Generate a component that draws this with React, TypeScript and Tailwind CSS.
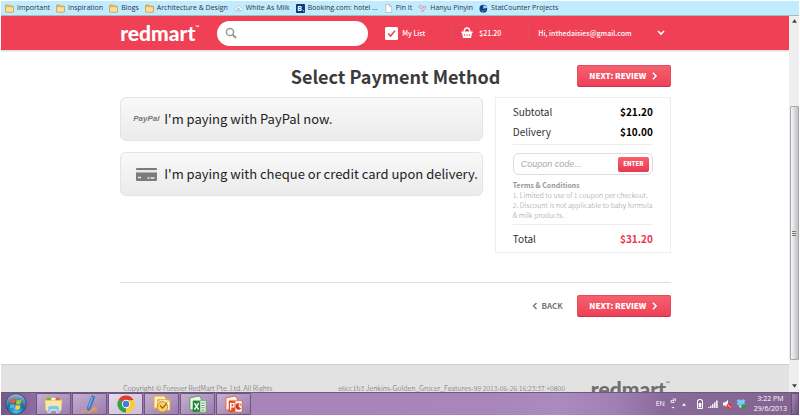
import type { ReactNode } from 'react';

const sourceFont = "font-['Noto_Sans_CJK_SC','Open_Sans',sans-serif]";

function FolderIcon() {
  return (
    <svg viewBox="0 0 10 10" className="w-[9px] h-[9px] shrink-0">
      <path d="M.5 2q0-1 1-1h2.3l1 1.2h3.7q1 0 1 1v5q0 1-1 1h-7q-1 0-1-1z" fill="#e9b95a" stroke="#b98a35" strokeWidth=".6" />
      <path d="M1.2 3.6h7.6v4.3q0 .7-.7.7H1.9q-.7 0-.7-.7z" fill="#fbe09a" />
    </svg>
  );
}

function CloudIcon() {
  return (
    <svg viewBox="0 0 10 10" className="w-[9px] h-[9px] shrink-0">
      <path d="M2.4 7.8Q.4 7.4.8 5.5 1.1 4 2.8 4 3.4 2 5.2 2t2.3 2q1.8.1 1.9 1.9 0 1.6-1.7 1.9z" fill="#eefaff" stroke="#9fc0cf" strokeWidth=".6" />
      <path d="M3 7.8l2-3.4 2 3.4" fill="none" stroke="#7c97a5" strokeWidth=".8" />
    </svg>
  );
}

function BookingIcon() {
  return (
    <svg viewBox="0 0 10 10" className="w-[9px] h-[9px] shrink-0">
      <rect width="10" height="10" rx="1" fill="#0b3a85" />
      <text x="1.500" y="8" fontSize="8" fontWeight="bold" fill="#fff">
        B
      </text>
      <circle cx="8.300" cy="7.500" r=".8" fill="#6bc4f5" />
    </svg>
  );
}

function PageIcon() {
  return (
    <svg viewBox="0 0 10 10" className="w-[9px] h-[9px] shrink-0">
      <path d="M2 .5h4l2.500 2.500v6.500H2z" fill="#fff" stroke="#9a9a9a" strokeWidth=".6" />
      <path d="M6 .5V3h2.500" fill="none" stroke="#9a9a9a" strokeWidth=".6" />
    </svg>
  );
}

function PinyinIcon() {
  return (
    <svg viewBox="0 0 10 10" className="w-[9px] h-[9px] shrink-0">
      <path d="M1 2.500q1.500-2 3.500 0t4 0Q10 5 7 6.500L5 8.500M1 2.500Q1 5 3.500 5t3-2M3 7l2 2 1-3" fill="none" stroke="#e58fa3" strokeWidth="1" />
    </svg>
  );
}

function StatIcon() {
  return (
    <svg viewBox="0 0 10 10" className="w-[9px] h-[9px] shrink-0">
      <circle cx="4.800" cy="5.200" r="4.300" fill="#123c7c" />
      <path d="M4.800 5.200V1.500q3 0 4.500 2.700z" fill="#a7d4f2" />
      <path d="M2 7.500q3 1.500 5.500-.8" stroke="#4b8bd0" strokeWidth="1" fill="none" />
    </svg>
  );
}

const bookmarks: { label: string; icon: ReactNode }[] = [
  { label: 'Important', icon: <FolderIcon /> },
  { label: 'Inspiration', icon: <FolderIcon /> },
  { label: 'Blogs', icon: <FolderIcon /> },
  { label: 'Architecture & Design', icon: <FolderIcon /> },
  { label: 'White As Milk', icon: <CloudIcon /> },
  { label: 'Booking.com: hotel ...', icon: <BookingIcon /> },
  { label: 'Pin It', icon: <PageIcon /> },
  { label: 'Hanyu Pinyin', icon: <PinyinIcon /> },
  { label: 'StatCounter Projects', icon: <StatIcon /> },
];

function BookmarksBar() {
  return (
    <nav className="flex h-4 shrink-0 items-center gap-[6px] border-t border-b border-t-white border-b-[#a5b9c2] bg-[#c0ecfe] pl-1 font-['Open_Sans',sans-serif] text-[7px] leading-3 text-[#33343f]">
      {bookmarks.map((b) => (
        <a key={b.label} href="#" className="flex items-center gap-[3px] whitespace-nowrap">
          {b.icon}
          {b.label}
        </a>
      ))}
    </nav>
  );
}

function Logo({ className }: { className: string }) {
  return (
    <span className={`flex items-start font-['Lato',sans-serif] text-[21px] leading-6 font-black ${className}`}>
      redmart
      <sup className="top-0 text-[5px] leading-3">™</sup>
    </span>
  );
}

function Chevron({ className, d = 'M2 1l4 4-4 4' }: { className: string; d?: string }) {
  return (
    <svg viewBox="0 0 8 10" className={className} fill="none" stroke="currentColor" strokeWidth="1.800">
      <path d={d} />
    </svg>
  );
}

function Header() {
  return (
    <header className="relative z-10 shrink-0 bg-[#ef4056] text-white shadow-[0_1px_2px_rgba(0,0,0,0.2)]">
      <div className="mx-auto flex h-[34px] w-[70%] items-center pl-px text-[7px] leading-3 font-medium">
        <a href="#" className="w-[97px] shrink-0">
          <Logo className="text-white" />
        </a>
        <label className="flex h-[25px] w-[151px] shrink-0 items-center rounded-full bg-white px-2">
          <svg viewBox="0 0 12 12" className="h-3 w-3 text-[#999]" fill="none" stroke="currentColor" strokeWidth="1.500">
            <circle cx="5" cy="5" r="3.600" />
            <path d="M7.600 7.600L11 11" strokeWidth="2" />
          </svg>
          <input type="search" aria-label="Search" className="min-w-0 flex-1 bg-transparent px-1 text-gray-700 outline-none" />
        </label>
        <a href="#" className="ml-[17px] flex w-[67px] shrink-0 items-center gap-1">
          <svg viewBox="0 0 13 13" className="h-[13px] w-[13px]">
            <rect width="13" height="13" rx="1.500" fill="#fff" />
            <path d="M3 6.500l2.600 2.600L10 3.800" fill="none" stroke="#ef4056" strokeWidth="1.500" />
          </svg>
          My List
        </a>
        <a href="#" className="flex w-[76px] shrink-0 items-center gap-[6px] border-l border-[#d9505f] py-0.5 pl-[8px]">
          <svg viewBox="0 0 12 12" className="h-3 w-3">
            <path d="M3 5.500Q3 1 6 1t3 4.500" fill="none" stroke="#fff" strokeWidth="1.300" />
            <path d="M.3 4.500h11.400V6H11l-1 5H2L1 6H.3z" fill="#fff" />
            <path d="M3.500 7l.3 2M6 7v2M8.500 7l-.3 2" stroke="#ef4056" strokeWidth=".8" />
          </svg>
          $21.20
        </a>
        <button className="flex flex-1 items-center justify-between border-l border-[#d9505f] py-0.5 pr-[6px] pl-[9px] whitespace-nowrap">
          Hi, inthedaisies@gmail.com
          <svg viewBox="0 0 8 6" className="h-[6px] w-2" fill="none" stroke="currentColor" strokeWidth="1.600">
            <path d="M1 1l3 3 3-3" />
          </svg>
        </button>
      </div>
    </header>
  );
}

function NextButton() {
  return (
    <button className="flex h-[22px] w-[94px] shrink-0 items-center justify-center gap-[5px] rounded-[2px] border border-[#e84a5e] border-b-[#c93248] bg-gradient-to-b from-[#f5606f] to-[#ee3f56] text-[8px] leading-4 font-black text-white">
      NEXT: REVIEW
      <Chevron className="h-2 w-[7px]" />
    </button>
  );
}

function PaymentOption({ icon, label }: { icon: ReactNode; label: string }) {
  return (
    <button className="flex h-11 w-full items-center rounded-md border border-[#e4e4e4] bg-gradient-to-b from-[#f9f9f9] to-[#ebebeb] pl-3 text-left text-[13px] leading-5 whitespace-nowrap text-[#222]">
      <span className="w-[31px] shrink-0">{icon}</span>
      {label}
    </button>
  );
}

function OrderSummary() {
  return (
    <aside className="h-[156px] w-[176px] shrink-0 border border-[#eee] px-[17px] pt-1 text-[10px] text-[#333]">
      <dl className="flex flex-wrap justify-between border-b border-[#eee] pb-[2px] leading-5">
        <dt className="w-1/2">Subtotal</dt>
        <dd className="font-bold text-black">$21.20</dd>
        <dt className="w-1/2">Delivery</dt>
        <dd className="font-bold text-black">$10.00</dd>
      </dl>
      <form className="mt-2 flex h-[22px] items-center rounded-md border border-[#ddd] pr-[3px] pl-[7px]" onSubmit={(e) => e.preventDefault()}>
        <input
          aria-label="Coupon code"
          placeholder="Coupon code..."
          className="min-w-0 flex-1 font-['Liberation_Sans',sans-serif] text-[9px] leading-4 italic outline-none placeholder:text-[#aaa]"
        />
        <button className="h-[15px] w-[31px] rounded-[2px] bg-gradient-to-b from-[#f5606f] to-[#e9374f] text-[6px] leading-3 font-black text-white">
          ENTER
        </button>
      </form>
      <div className="mt-[5px] border-b border-[#eee] pb-1 text-[7px] leading-[10px] font-light whitespace-nowrap text-[#999]">
        <h2 className="font-bold">Terms &amp; Conditions</h2>
        <p>1. Limited to use of 1 coupon per checkout.</p>
        <p>
          2. Discount is not applicable to baby formula
          <br />
          &amp; milk products.
        </p>
      </div>
      <dl className="mt-1 flex justify-between leading-5">
        <dt>Total</dt>
        <dd className="font-bold text-[#ef3350]">$31.20</dd>
      </dl>
    </aside>
  );
}

function Scrollbar() {
  return (
    <div className="flex w-[10px] shrink-0 flex-col items-center bg-[#efefef]">
      <svg viewBox="0 0 6 4" className="mt-[3px] h-1 w-[5px]">
        <path d="M0 4l3-4 3 4z" fill="#444" />
      </svg>
      <div className="h-[83px] shrink-0" />
      <div className="flex w-[9px] flex-1 flex-col items-center justify-center gap-px rounded-[1px] border border-[#a5a7aa] bg-gradient-to-r from-[#f7f7f7] to-[#bfc1c6]">
        <div className="h-px w-1 bg-[#777]" />
        <div className="h-px w-1 bg-[#777]" />
        <div className="h-px w-1 bg-[#777]" />
      </div>
      <svg viewBox="0 0 6 4" className="mt-6 mb-1 h-1 w-[5px]">
        <path d="M0 0l3 4 3-4z" fill="#444" />
      </svg>
    </div>
  );
}

function StartOrb() {
  return (
    <svg viewBox="0 0 22 22" className="h-[22px] w-[22px]">
      <defs>
        <radialGradient id="orb" cx=".5" cy=".9" r=".9">
          <stop offset="0" stopColor="#43c6ef" />
          <stop offset=".5" stopColor="#22689b" />
          <stop offset="1" stopColor="#a3bdd0" />
        </radialGradient>
      </defs>
      <circle cx="11" cy="11" r="10.300" fill="url(#orb)" stroke="#2c4361" strokeWidth=".8" />
      <path d="M6 6.500q2.500-1.400 4.700-.2L10 10.500q-2.300-1-4.700.2z" fill="#f0592a" />
      <path d="M11.600 6.700q2.300 1.200 4.800 0l-.8 4.200q-2.400 1.100-4.700 0z" fill="#94cc3c" />
      <path d="M5.100 11.600q2.500-1.200 4.700-.1L9 15.500q-2.200-1-4.600.2z" fill="#45b5ec" />
      <path d="M10.700 11.900q2.300 1.100 4.700 0l-.8 4.100q-2.400 1.100-4.600-.1z" fill="#fbd13b" />
    </svg>
  );
}

function ExplorerIcon() {
  return (
    <svg viewBox="0 0 20 20" className="h-[19px] w-[19px]">
      <path d="M1.500 3.500L3 2h6l1 1.500h8v12h-16.500z" fill="#d9b04f" />
      <path d="M3 3h4v3H3z" fill="#5ab44a" />
      <path d="M8 3h4v3H8z" fill="#fff" />
      <path d="M12.500 3h4v3h-4z" fill="#dd5b3c" />
      <path d="M1 5.500h18l-.8 11H1.800z" fill="#fbe89c" stroke="#d8b75a" strokeWidth=".5" />
      <path d="M4 18.500v-5Q4 11 7 11h6q3 0 3 2.500v5h-3v-3H7v3z" fill="#83c6ec" stroke="#d7f0fb" strokeWidth=".8" />
    </svg>
  );
}

function PenIcon() {
  return (
    <svg viewBox="0 0 20 20" className="h-[19px] w-[19px]">
      <path d="M12.500.8l3 1-4.500 12.500-2.800 3-.3-4z" fill="#3f86d0" stroke="#235f9f" strokeWidth=".6" />
      <path d="M13 2L9 13" stroke="#a5d0f4" strokeWidth=".8" />
      <path d="M2 18.500q4-3 6-1.500t4 .5 1-3q1.500-1.500 5-.5-4 .5-3 2t3 .5" fill="none" stroke="#e9a33c" strokeWidth="1.300" />
    </svg>
  );
}

function ChromeIcon() {
  return (
    <svg viewBox="0 0 20 20" className="h-[18px] w-[18px]">
      <path d="M10 10L1.770 5.250A9.500 9.500 0 0 1 18.230 5.250z" fill="#dc3d2e" />
      <path d="M10 10L18.230 5.250A9.500 9.500 0 0 1 10 19.500z" fill="#fbce2f" />
      <path d="M10 10L10 19.500A9.500 9.500 0 0 1 1.770 5.250z" fill="#2fa14c" />
      <path d="M10 5.700h8.400l-2 5-3 2z" fill="#fbce2f" />
      <circle cx="10" cy="10" r="4.600" fill="#fff" />
      <circle cx="10" cy="10" r="3.600" fill="#3f7de0" />
    </svg>
  );
}

function OutlookIcon() {
  return (
    <svg viewBox="0 0 20 20" className="h-[19px] w-[19px]">
      <path d="M2 1h11l2 3v10H2z" fill="#fcefc3" stroke="#e4a52c" strokeWidth="1.200" />
      <path d="M6 5h13v11H6z" fill="#fff7dd" stroke="#dda033" strokeWidth="1" />
      <path d="M6 5l6.500 5L19 5" fill="none" stroke="#dda033" />
      <circle cx="11" cy="12.500" r="5.500" fill="#fbcf62" stroke="#d08a1c" />
      <path d="M8.300 11l2.700 2.800 4.500-5" fill="none" stroke="#8a5a16" strokeWidth="1.200" />
    </svg>
  );
}

function ExcelIcon() {
  return (
    <svg viewBox="0 0 20 20" className="h-[19px] w-[19px]">
      <path d="M2 3l10-2 2 3v10L2 16z" fill="#ecf7e9" stroke="#4da24f" />
      <path d="M6 6h13v12H6z" fill="#fff" stroke="#5aa75c" strokeWidth=".8" />
      <path d="M14 8.500h3.500M14 11h3.500M14 13.500h3.500M14 16h3.500" stroke="#388b40" />
      <path d="M5 6l8 .5v11L5 18z" fill="#24833a" />
      <path d="M6.800 8.500l4.400 7M11.200 8.500l-4.400 7" stroke="#fff" strokeWidth="1.500" />
    </svg>
  );
}

function PowerPointIcon() {
  return (
    <svg viewBox="0 0 20 20" className="h-[19px] w-[19px]">
      <path d="M2 3l10-2 2 3v10L2 16z" fill="#fff0e8" stroke="#e4683c" />
      <path d="M6 6h13v12H6z" fill="#fff" stroke="#dd5f38" strokeWidth=".8" />
      <path d="M5 6l7 .5v11L5 18z" fill="#e04e24" />
      <rect x="7" y="9" width="3.500" height="3.500" fill="none" stroke="#fff" strokeWidth="1.300" />
      <path d="M7 9v7" stroke="#fff" strokeWidth="1.300" />
      <path d="M15.500 8.500a3.500 3.500 0 1 0 2.500 5.900l-2.500-2.400z" fill="#d8391c" />
      <path d="M16.300 8.500v2.700h2.200q-.2-2.400-2.200-2.700z" fill="#ef7a50" />
    </svg>
  );
}

const taskButtons: { name: string; icon: ReactNode; active?: boolean }[] = [
  { name: 'Explorer', icon: <ExplorerIcon /> },
  { name: 'Journal', icon: <PenIcon /> },
  { name: 'Chrome', icon: <ChromeIcon />, active: true },
  { name: 'Outlook', icon: <OutlookIcon /> },
  { name: 'Excel', icon: <ExcelIcon /> },
  { name: 'PowerPoint', icon: <PowerPointIcon /> },
];

function Taskbar() {
  return (
    <div className="flex h-6 shrink-0 items-stretch border-t border-b border-t-[#6c5a79] border-b-white bg-[linear-gradient(90deg,#78588a_0,#8c6aa2_4%,#a785bb_30%,#a886bc_62%,#ab8ac0_70%,#a07fb3_77%,#8a6a9b_83%,#82648f_100%)] text-white">
      <button aria-label="Start" className="flex w-[35px] shrink-0 items-center pl-1">
        <StartOrb />
      </button>
      <div className="flex gap-px">
        {taskButtons.map((b) => (
          <button
            key={b.name}
            aria-label={b.name}
            className={`flex w-[35px] items-center justify-center rounded-[1px] border border-[#705482] ${
              b.active
                ? 'bg-gradient-to-br from-[#e4dbe9] to-[#cdbfd5]'
                : 'bg-gradient-to-br from-[#c5b0d1] to-[#9a7bae]'
            }`}>
            {b.icon}
          </button>
        ))}
      </div>
      <div className="ml-auto flex items-center gap-1 font-['Open_Sans',sans-serif] text-[7px] leading-[10px]">
        <span>EN</span>
        <svg viewBox="0 0 6 12" className="ml-px h-3 w-[6px]" fill="none" stroke="#fff" strokeWidth=".8">
          <path d="M1 2.500h3v2H1zM2.500 1h3v2" />
          <path d="M1.500 9h3L3 10.500z" fill="#fff" stroke="none" />
        </svg>
        <svg viewBox="0 0 6 4" className="mx-[2px] h-[3px] w-1">
          <path d="M0 4l3-4 3 4z" fill="#fff" />
        </svg>
        <svg viewBox="0 0 8 10" className="ml-1 h-[10px] w-2">
          <path d="M2.500.5h3v1h1V9.500h-5v-8h1z" fill="none" stroke="#fff" />
          <path d="M2.700 4h2.600v4.300H2.700z" fill="#fff" />
        </svg>
        <svg viewBox="0 0 10 8" className="h-2 w-[10px]">
          <path d="M0 8V7h1.500v1zM2 8V5.700h1.500V8zM4 8V4h1.500v4zM6 8V2.300h1.500V8zM8 8V.5h1.700V8z" fill="#eee" />
        </svg>
        <svg viewBox="0 0 10 10" className="h-[10px] w-[10px]">
          <path d="M1 3.500h2L6 1v8L3 6.500H1z" fill="#fff" />
          <circle cx="7.200" cy="7" r="2.700" fill="#e13a32" />
          <path d="M5.700 5.700l3 2.800" stroke="#fff" strokeWidth=".8" />
        </svg>
        <svg viewBox="0 0 10 10" className="h-[10px] w-[10px]">
          <path d="M3 0l2 1.500L7 0l2.500 2L8 3.500 9.500 5 7 6.500 5 5 3 6.500.5 5 2 3.500.5 2z" fill="#79caff" />
          <path d="M5 5.500l2.200 1.700L5 9 2.500 7.200z" fill="#c1e6ff" />
          <circle cx="7.500" cy="7.600" r="2.300" fill="#2b9a45" />
        </svg>
        <time className="ml-1 flex flex-col items-center">
          <span>3:22 PM</span>
          <span>29/6/2013</span>
        </time>
        <div className="h-[22px] w-2 border border-[#69507a] bg-gradient-to-br from-[#a58bb3] to-[#6c4f7c]" />
      </div>
    </div>
  );
}

export default function App() {
  return (
    <div className={`flex h-screen flex-col overflow-hidden bg-white px-px ${sourceFont}`}>
      <BookmarksBar />
      <div className="flex min-h-0 flex-1">
        <div className="flex min-w-0 flex-1 flex-col overflow-hidden">
          <Header />
          <main className="mx-auto h-[314px] w-[70%] shrink-0 pt-[15px] pl-px">
            <div className="flex h-[22px] items-center justify-end">
              <h1 className="flex-1 pl-[94px] text-center text-lg leading-[22px] font-bold whitespace-nowrap text-[#3b3b3b]">
                Select Payment Method
              </h1>
              <NextButton />
            </div>
            <div className="mt-[10px] flex items-start justify-between gap-3">
              <div className="flex min-w-0 flex-1 flex-col gap-[11px]">
                <PaymentOption
                  icon={<i className="block font-['Liberation_Sans',sans-serif] text-[8px] font-bold text-[#777]">PayPal</i>}
                  label="I'm paying with PayPal now."
                />
                <PaymentOption
                  icon={
                    <svg viewBox="0 0 21 13" className="ml-[3px] h-[13px] w-[21px]">
                      <rect width="21" height="13" rx="1" fill="#7b7b7b" />
                      <path d="M0 2h21v2.500H0z" fill="#e9e9e9" />
                      <path d="M2 9.500h3M11.500 10h2M14.500 10h4" stroke="#e9e9e9" strokeWidth="1.300" />
                    </svg>
                  }
                  label="I'm paying with cheque or credit card upon delivery."
                />
              </div>
              <OrderSummary />
            </div>
            <div className="mt-[29px] flex items-center justify-end gap-[14px] border-t border-[#ddd] pt-3">
              <a href="#" className="flex items-center gap-1 text-[8px] leading-4 font-bold text-[#777]">
                <Chevron className="h-2 w-[6px]" d="M6 1L2 5l4 4" />
                BACK
              </a>
              <NextButton />
            </div>
          </main>
          <footer className="flex-1 border-t border-[#cfcfcf] bg-[#e2e2e2]">
            <div className="mx-auto flex w-[70%] items-start justify-between pt-3 pr-px pl-1 text-[7px] leading-3 font-light whitespace-nowrap text-[#666]">
              <span className="mt-[5px]">Copyright © Forever RedMart Pte. Ltd. All Rights</span>
              <span className="mt-[5px] ml-10">e6cc1b3 Jenkins-Golden_Grocer_Features-99 2013-06-26 16:23:37 +0800</span>
              <Logo className="text-[#6f6f6f]" />
            </div>
          </footer>
        </div>
        <Scrollbar />
      </div>
      <Taskbar />
    </div>
  );
}
